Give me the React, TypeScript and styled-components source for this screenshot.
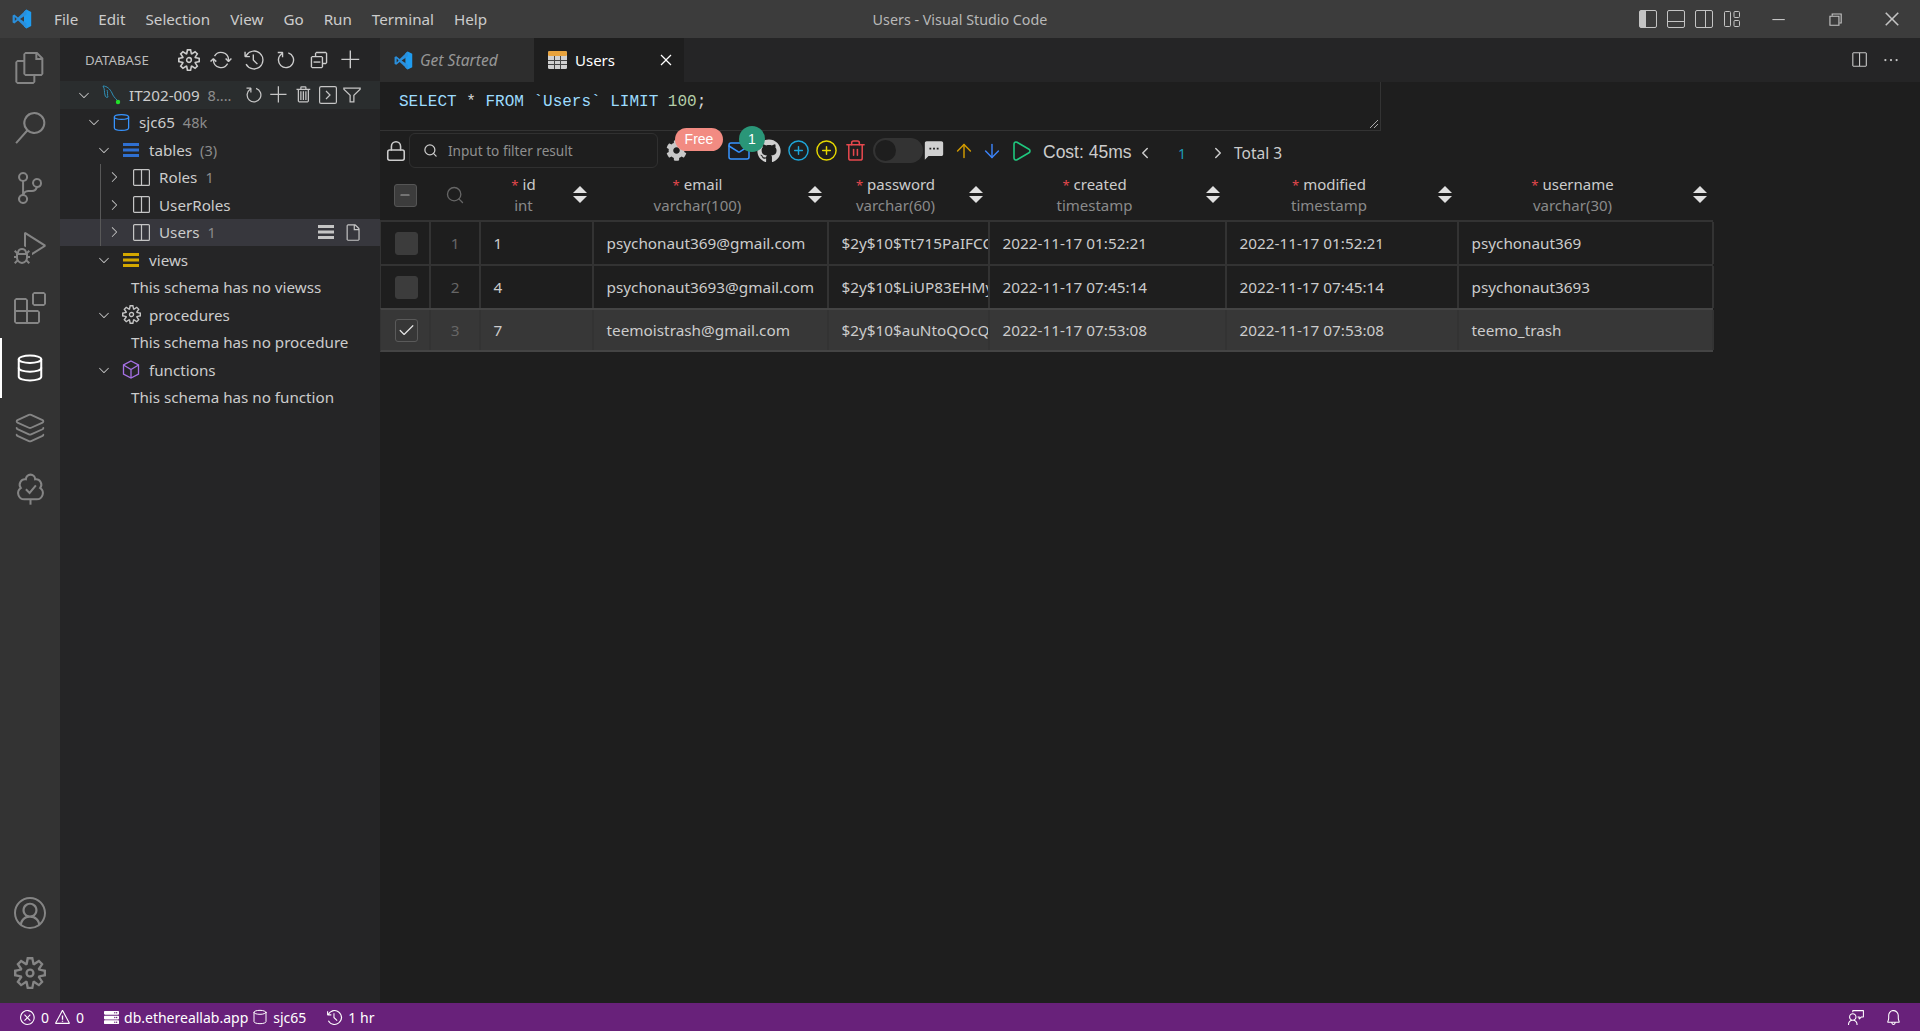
import styled, { createGlobalStyle } from "styled-components";
import type { ReactNode } from "react";
import {
  ArrowDown,
  ArrowUp,
  Check,
  ChevronLeft,
  ChevronRight,
  CirclePlus,
  Cylinder,
  Database,
  Layers,
  Lock,
  Mail,
  Minus,
  Play,
  Search,
  Trash2,
} from "lucide-react";
import {
  VscAccount,
  VscAdd,
  VscBell,
  VscChevronDown,
  VscChevronRight,
  VscChromeClose,
  VscChromeMinimize,
  VscChromeRestore,
  VscClose,
  VscCollapseAll,
  VscDebugAlt,
  VscEllipsis,
  VscError,
  VscExtensions,
  VscFeedback,
  VscFile,
  VscFiles,
  VscFilter,
  VscHistory,
  VscRefresh,
  VscSearch,
  VscSettingsGear,
  VscSourceControl,
  VscSplitHorizontal,
  VscSync,
  VscTrash,
  VscWarning,
} from "react-icons/vsc";
import { FaCog, FaGithub, FaServer } from "react-icons/fa";
import { MdSms } from "react-icons/md";

const UI_FONT = `"Noto Sans", "Open Sans", "Liberation Sans", sans-serif`;
const COLUMNS = "50px 50px 113px 235px 161px 237px 232px 255px";

const GlobalStyle = createGlobalStyle`
  html, body {
    margin: 0;
    padding: 0;
    height: 100%;
    overflow: hidden;
    background: #1e1e1e;
  }
  #root {
    height: 100%;
  }
  * {
    box-sizing: border-box;
  }
`;

const Page = styled.div`
  display: flex;
  flex-direction: column;
  height: 1031px;
  font-family: ${UI_FONT};
  color: #cccccc;
`;

/* title bar */

const TitleBar = styled.div`
  display: grid;
  grid-template-columns: 1fr auto 1fr;
  align-items: center;
  height: 38px;
  flex: none;
  background: #3c3c3c;
`;

const TitleLeft = styled.div`
  display: flex;
  align-items: center;
  padding-left: 12px;
`;

const MenuList = styled.div`
  display: flex;
  gap: 20px;
  margin-left: 22px;
  font-size: 15.2px;
  color: #cccccc;
`;

const WindowTitle = styled.div`
  font-size: 14.3px;
  color: #b8b8b8;
`;

const TitleRight = styled.div`
  display: flex;
  align-items: center;
  justify-content: flex-end;
  color: #c4c4c4;
`;

const LayoutIcons = styled.div`
  display: flex;
  gap: 10px;
  margin-right: 8px;
`;

const WindowButton = styled.div`
  display: flex;
  align-items: center;
  justify-content: center;
  width: 57px;
  height: 38px;
`;

/* body */

const Body = styled.div`
  display: flex;
  flex: 1;
  min-height: 0;
`;

const ActivityBar = styled.div`
  display: flex;
  flex-direction: column;
  width: 60px;
  flex: none;
  background: #333333;
`;

const ActivityItem = styled.div<{ $active?: boolean }>`
  display: flex;
  align-items: center;
  justify-content: center;
  height: 60px;
  color: ${(p) => (p.$active ? "#ffffff" : "#858585")};
  border-left: 2px solid ${(p) => (p.$active ? "#ffffff" : "transparent")};
  padding-right: 2px;
`;

const ActivitySpacer = styled.div`
  flex: 1;
`;

const SideBar = styled.div`
  width: 320px;
  flex: none;
  background: #252526;
  font-size: 15.2px;
`;

const SideHeader = styled.div`
  display: flex;
  align-items: center;
  height: 43px;
  padding-left: 25px;
  font-size: 13.3px;
  color: #bbbbbb;
`;

const SideHeaderIcons = styled.div`
  display: flex;
  gap: 10.5px;
  margin-left: 29px;
  color: #cccccc;
`;

const TreeGroup = styled.div`
  position: relative;
  &::before {
    content: "";
    position: absolute;
    left: 40px;
    top: 0;
    bottom: 0;
    width: 1px;
    background: #585858;
    z-index: 1;
  }
`;

const TreeRow = styled.div<{ $indent: number; $bg?: string }>`
  display: flex;
  align-items: center;
  height: 27.5px;
  padding-left: ${(p) => p.$indent}px;
  padding-right: 18px;
  background: ${(p) => p.$bg || "transparent"};
  white-space: nowrap;
`;

const Twistie = styled.span`
  display: flex;
  width: 16px;
  flex: none;
  justify-content: center;
  color: #c5c5c5;
`;

const TreeIcon = styled.span<{ $color?: string }>`
  display: flex;
  width: 20px;
  flex: none;
  margin-left: 9px;
  margin-right: 8px;
  justify-content: center;
  color: ${(p) => p.$color || "#c5c5c5"};
`;

const TreeDesc = styled.span`
  margin-left: 8px;
  color: #8c8c8c;
  font-size: 14.5px;
`;

const TreeActions = styled.span<{ $gap: number }>`
  display: flex;
  align-items: center;
  gap: ${(p) => p.$gap}px;
  margin-left: auto;
  color: #c5c5c5;
`;

/* editor */

const Editor = styled.div`
  flex: 1;
  min-width: 0;
  background: #1e1e1e;
`;

const TabBar = styled.div`
  display: flex;
  align-items: stretch;
  height: 44px;
  background: #252526;
`;

const Tab = styled.div<{ $active?: boolean; $w: number }>`
  display: flex;
  align-items: center;
  gap: ${(p) => (p.$active ? 8 : 7)}px;
  width: ${(p) => p.$w}px;
  padding-left: 14px;
  font-size: ${(p) => (p.$active ? 15 : 15.6)}px;
  font-style: ${(p) => (p.$active ? "normal" : "italic")};
  color: ${(p) => (p.$active ? "#ffffff" : "#969696")};
  background: ${(p) => (p.$active ? "#1e1e1e" : "#2d2d2d")};
`;

const TabClose = styled.span`
  display: flex;
  margin-left: auto;
  margin-right: 8px;
  color: #ffffff;
`;

const EditorActions = styled.div`
  display: flex;
  align-items: center;
  gap: 14px;
  margin-left: auto;
  padding-right: 20px;
  color: #c5c5c5;
`;

const SqlBox = styled.div`
  position: relative;
  width: 1001px;
  height: 49px;
  padding: 10px 19px;
  border-right: 1px solid #333333;
  border-bottom: 1px solid #333333;
  font-family: "Liberation Mono", monospace;
  font-size: 16px;
  line-height: 20px;
  color: #9cdcfe;
`;

const SqlNumber = styled.span`
  color: #b5cea8;
`;

const SqlPunct = styled.span`
  color: #d4d4d4;
`;

const ResizeGrip = styled.svg`
  position: absolute;
  right: 1px;
  bottom: 1px;
`;

const Toolbar = styled.div`
  display: flex;
  align-items: center;
  height: 39px;
  padding-left: 3px;
  color: #cccccc;
`;

const Slot = styled.div<{ $w: number; $ml?: number; $color?: string }>`
  position: relative;
  display: flex;
  align-items: center;
  justify-content: center;
  flex: none;
  width: ${(p) => p.$w}px;
  margin-left: ${(p) => p.$ml || 0}px;
  color: ${(p) => p.$color || "#cccccc"};
`;

const FilterInput = styled.div`
  display: flex;
  align-items: center;
  gap: 10px;
  width: 249px;
  height: 35px;
  padding-left: 13px;
  flex: none;
  border: 1px solid #303030;
  border-radius: 6px;
  font-size: 13.6px;
  color: #8f8f8f;
`;

const FreeBadge = styled.span`
  position: absolute;
  left: 17px;
  top: -12px;
  width: 48px;
  height: 23px;
  border-radius: 12px;
  background: #f28b82;
  color: #ffffff;
  font-family: "Liberation Sans", sans-serif;
  font-size: 14px;
  line-height: 23px;
  text-align: center;
`;

const CountBadge = styled.span`
  position: absolute;
  left: 15px;
  top: -13px;
  width: 26px;
  height: 26px;
  border-radius: 50%;
  background: #2a9678;
  color: #ffffff;
  font-family: "Liberation Sans", sans-serif;
  font-size: 14px;
  line-height: 26px;
  text-align: center;
  z-index: 1;
`;

const Toggle = styled.div`
  position: relative;
  width: 50px;
  height: 25px;
  margin-left: 3px;
  flex: none;
  border-radius: 13px;
  background: #333333;
  &::before {
    content: "";
    position: absolute;
    left: 2px;
    top: 2px;
    width: 21px;
    height: 21px;
    border-radius: 50%;
    background: #1e1e1e;
  }
`;

const CostLabel = styled.span`
  margin-left: 8px;
  margin-top: 4px;
  width: 88px;
  flex: none;
  font-family: "Liberation Sans", sans-serif;
  font-size: 17.5px;
  white-space: nowrap;
`;

const PagerArrow = styled(Slot)`
  margin-top: 4px;
`;

const PageNumber = styled.span`
  width: 46px;
  margin-top: 5px;
  flex: none;
  text-align: center;
  font-size: 14px;
  color: #1f9cb8;
`;

const TotalLabel = styled.span`
  margin-left: 3px;
  margin-top: 4px;
  font-size: 15.5px;
  white-space: nowrap;
`;

/* result table */

const Grid = styled.div`
  display: grid;
  grid-template-columns: ${COLUMNS};
  width: 1333px;
`;

const HeaderRow = styled(Grid)`
  height: 50px;
`;

const HeaderCell = styled.div`
  position: relative;
  display: flex;
  flex-direction: column;
  align-items: center;
  justify-content: center;
  padding-top: 1px;
  padding-right: 26px;
  font-size: 15px;
  line-height: 19.6px;
`;

const HeaderTool = styled.div`
  display: flex;
  align-items: center;
  justify-content: center;
`;

const ColumnName = styled.span`
  color: #cccccc;
  white-space: nowrap;
`;

const Required = styled.span`
  color: #e5484d;
  margin-right: 4px;
  font-size: 13px;
`;

const ColumnType = styled.span`
  color: #8a8a8a;
  white-space: nowrap;
`;

const SortIcon = styled.svg`
  position: absolute;
  right: 6.5px;
  top: 16px;
`;

const DataRow = styled(Grid)<{ $selected?: boolean }>`
  height: 44px;
  background: ${(p) => (p.$selected ? "#373737" : "transparent")};
  border-top: 2px solid ${(p) => (p.$selected ? "#444444" : "#333333")};
  border-left: 1px solid #333333;
  &:last-child {
    border-bottom: 2px solid #444444;
  }
`;

const Cell = styled.div`
  display: flex;
  align-items: center;
  padding-left: 12.5px;
  border-right: 2px solid #333333;
  overflow: hidden;
  white-space: nowrap;
  font-size: 15.3px;
  color: #cccccc;
`;

const CenterCell = styled(Cell)`
  justify-content: center;
  padding-left: 0;
`;

const CheckCell = styled(CenterCell)`
  padding-left: 2px;
`;

const RowNumber = styled(CenterCell)`
  color: #666666;
`;

const CheckBox = styled.div<{ $outlined?: boolean }>`
  display: flex;
  align-items: center;
  justify-content: center;
  width: 23px;
  height: 23px;
  border-radius: 3px;
  background: ${(p) => (p.$outlined ? "transparent" : "#3c3c3c")};
  border: 1px solid ${(p) => (p.$outlined ? "#5a5a5a" : "#3c3c3c")};
  color: #e6e6e6;
`;

const HeaderCheck = styled(CheckBox)`
  background: #3c3c3c;
  border-color: #555555;
  color: #aaaaaa;
`;

/* status bar */

const StatusBar = styled.div`
  display: flex;
  align-items: center;
  height: 28px;
  flex: none;
  padding: 0 18px 0 19px;
  background: #68217a;
  color: #ffffff;
  font-size: 14px;
`;

const StatusItem = styled.span<{ $ml?: number }>`
  display: flex;
  align-items: center;
  gap: 5px;
  margin-left: ${(p) => p.$ml || 0}px;
  white-space: nowrap;
`;

const StatusRight = styled.div`
  display: flex;
  align-items: center;
  gap: 20px;
  margin-left: auto;
`;

const VsCodeLogo = ({ size }: { size: number }) => (
  <svg width={size} height={size} viewBox="0 0 100 100">
    <path d="M72 3 L96 15 V85 L72 97 L60 88 V12 Z" fill="#1f9cf0" />
    <path
      d="M72 3 L30 42 L12 27 L3 32 V68 L12 73 L30 58 L72 97 V71 L40 50 L72 29 Z M14 40 L24 50 L14 60 Z"
      fill="#2a8fdc"
      fillRule="evenodd"
    />
  </svg>
);

const LayoutIcon = ({ kind }: { kind: "left" | "bottom" | "right" | "custom" }) => (
  <svg width={18} height={18} viewBox="0 0 18 18" fill="none" stroke="currentColor" strokeWidth={1}>
    {kind === "custom" ? (
      <>
        <rect x="1.5" y="1.5" width="6" height="15" rx="1" />
        <rect x="11" y="1.5" width="5.5" height="6" rx="1" />
        <rect x="11" y="10.5" width="5.5" height="6" rx="1" />
      </>
    ) : (
      <>
        <rect x="0.5" y="0.5" width="17" height="17" rx="1.5" />
        {kind === "left" && <rect x="1" y="1" width="6" height="16" fill="currentColor" stroke="none" />}
        {kind === "bottom" && <path d="M1 11.5 H17" />}
        {kind === "right" && <path d="M10.5 1 V17" />}
      </>
    )}
  </svg>
);

const TreeCheckIcon = () => (
  <svg width={37} height={37} viewBox="0 0 24 24" fill="none" stroke="currentColor" strokeWidth={1.3}>
    <path d="M8 19a4 4 0 0 1-2.24-7.32A3.5 3.5 0 0 1 9 6.03V6a3 3 0 1 1 6 0v.04a3.5 3.5 0 0 1 3.24 5.65A4 4 0 0 1 16 19Z" />
    <path d="M12 19v3.5" />
    <path d="M9 12.5l2.4 2.4L15.5 10" />
  </svg>
);

const MysqlIcon = () => (
  <svg width={20} height={20} viewBox="0 0 20 20" fill="none">
    <path d="M2 1 C6 1 9 4 11 8 C12 11 14 13 16 15" stroke="#2f8fb5" strokeWidth={1} />
    <path d="M2 1 C4 4 3 7 4 10 C4 12 6 13 7 12 C6 10 7 7 6 5" stroke="#2f8fb5" strokeWidth={1} />
    <circle cx="17" cy="17" r="2.2" fill="#22e02a" />
  </svg>
);

const ListIcon = ({ color }: { color: string }) => (
  <svg width={18} height={16} viewBox="0 0 18 16" fill={color}>
    <rect x="1" y="1" width="16" height="3" />
    <rect x="1" y="6.5" width="16" height="3" />
    <rect x="1" y="12" width="16" height="3" />
  </svg>
);

const TableIcon = () => (
  <svg width={19} height={18} viewBox="0 0 19 18">
    <rect x="0" y="0" width="19" height="18" rx="1.5" fill="#d0d0d0" />
    <rect x="0" y="0" width="19" height="5" rx="1.5" fill="#e8a33d" />
    <path d="M6.5 5 V18 M12.5 5 V18 M0 9.5 H19 M0 13.5 H19" stroke="#444444" strokeWidth={1} />
  </svg>
);

const TableRowIcon = () => (
  <svg width={17} height={17} viewBox="0 0 17 17" fill="none" stroke="#c5c5c5" strokeWidth={1.2}>
    <rect x="0.6" y="0.6" width="15.8" height="15.8" rx="1" />
    <path d="M8.5 1 V16" />
  </svg>
);

const ConsoleIcon = () => (
  <svg width={18} height={18} viewBox="0 0 18 18" fill="none" stroke="currentColor" strokeWidth={1.2}>
    <rect x="0.6" y="0.6" width="16.8" height="16.8" rx="1.5" />
    <path d="M7 5 L11 9 L7 13" />
  </svg>
);

const SortArrows = () => (
  <SortIcon width={14} height={17} viewBox="0 0 14 17" fill="#e0e0e0">
    <path d="M7 0 L14 7 H0 Z" />
    <path d="M0 10 H14 L7 17 Z" />
  </SortIcon>
);

const Expanded = () => (
  <Twistie>
    <VscChevronDown size={18} />
  </Twistie>
);

const Collapsed = () => (
  <Twistie>
    <VscChevronRight size={18} />
  </Twistie>
);

const ACTIVITY_TOP: { key: string; icon: ReactNode; active?: boolean }[] = [
  { key: "files", icon: <VscFiles size={32} /> },
  { key: "search", icon: <VscSearch size={32} /> },
  { key: "git", icon: <VscSourceControl size={32} /> },
  { key: "debug", icon: <VscDebugAlt size={32} /> },
  { key: "ext", icon: <VscExtensions size={32} /> },
  { key: "db", icon: <Database size={30} strokeWidth={1.6} />, active: true },
  { key: "layers", icon: <Layers size={32} strokeWidth={1.4} /> },
  { key: "tree", icon: <TreeCheckIcon /> },
];

const MENU = ["File", "Edit", "Selection", "View", "Go", "Run", "Terminal", "Help"];

const HEADERS = [
  { name: "id", type: "int" },
  { name: "email", type: "varchar(100)" },
  { name: "password", type: "varchar(60)" },
  { name: "created", type: "timestamp" },
  { name: "modified", type: "timestamp" },
  { name: "username", type: "varchar(30)" },
];

const ROWS = [
  {
    id: "1",
    email: "psychonaut369@gmail.com",
    password: "$2y$10$Tt715PaIFCC",
    created: "2022-11-17 01:52:21",
    modified: "2022-11-17 01:52:21",
    username: "psychonaut369",
  },
  {
    id: "4",
    email: "psychonaut3693@gmail.com",
    password: "$2y$10$LiUP83EHMy",
    created: "2022-11-17 07:45:14",
    modified: "2022-11-17 07:45:14",
    username: "psychonaut3693",
  },
  {
    id: "7",
    email: "teemoistrash@gmail.com",
    password: "$2y$10$auNtoQOcQ",
    created: "2022-11-17 07:53:08",
    modified: "2022-11-17 07:53:08",
    username: "teemo_trash",
    selected: true,
  },
];

const App = () => {
  return (
    <Page>
      <GlobalStyle />
      <TitleBar>
        <TitleLeft>
          <VsCodeLogo size={20} />
          <MenuList>
            {MENU.map((item) => (
              <span key={item}>{item}</span>
            ))}
          </MenuList>
        </TitleLeft>
        <WindowTitle>Users - Visual Studio Code</WindowTitle>
        <TitleRight>
          <LayoutIcons>
            <LayoutIcon kind="left" />
            <LayoutIcon kind="bottom" />
            <LayoutIcon kind="right" />
            <LayoutIcon kind="custom" />
          </LayoutIcons>
          <WindowButton>
            <VscChromeMinimize size={18} />
          </WindowButton>
          <WindowButton>
            <VscChromeRestore size={18} />
          </WindowButton>
          <WindowButton>
            <VscChromeClose size={20} />
          </WindowButton>
        </TitleRight>
      </TitleBar>

      <Body>
        <ActivityBar>
          {ACTIVITY_TOP.map((item) => (
            <ActivityItem key={item.key} $active={item.active}>
              {item.icon}
            </ActivityItem>
          ))}
          <ActivitySpacer />
          <ActivityItem>
            <VscAccount size={32} />
          </ActivityItem>
          <ActivityItem>
            <VscSettingsGear size={32} />
          </ActivityItem>
        </ActivityBar>

        <SideBar>
          <SideHeader>
            DATABASE
            <SideHeaderIcons>
              <VscSettingsGear size={22} />
              <VscSync size={22} />
              <VscHistory size={22} />
              <VscRefresh size={22} />
              <VscCollapseAll size={22} />
              <VscAdd size={22} />
            </SideHeaderIcons>
          </SideHeader>

          <TreeRow $indent={16} $bg="#2a2d2e">
            <Expanded />
            <TreeIcon>
              <MysqlIcon />
            </TreeIcon>
            IT202-009
            <TreeDesc>8....</TreeDesc>
            <TreeActions $gap={5}>
              <VscRefresh size={20} />
              <VscAdd size={20} />
              <VscTrash size={20} />
              <ConsoleIcon />
              <VscFilter size={20} />
            </TreeActions>
          </TreeRow>
          <TreeRow $indent={26}>
            <Expanded />
            <TreeIcon $color="#3794ff">
              <Cylinder size={19} strokeWidth={1.6} />
            </TreeIcon>
            sjc65
            <TreeDesc>48k</TreeDesc>
          </TreeRow>
          <TreeRow $indent={36}>
            <Expanded />
            <TreeIcon>
              <ListIcon color="#2f6fd0" />
            </TreeIcon>
            tables
            <TreeDesc>(3)</TreeDesc>
          </TreeRow>
          <TreeGroup>
            <TreeRow $indent={46}>
              <Collapsed />
              <TreeIcon>
                <TableRowIcon />
              </TreeIcon>
              Roles
              <TreeDesc>1</TreeDesc>
            </TreeRow>
            <TreeRow $indent={46}>
              <Collapsed />
              <TreeIcon>
                <TableRowIcon />
              </TreeIcon>
              UserRoles
            </TreeRow>
            <TreeRow $indent={46} $bg="#37373d">
              <Collapsed />
              <TreeIcon>
                <TableRowIcon />
              </TreeIcon>
              Users
              <TreeDesc>1</TreeDesc>
              <TreeActions $gap={8}>
                <ListIcon color="#c5c5c5" />
                <VscFile size={19} />
              </TreeActions>
            </TreeRow>
          </TreeGroup>
          <TreeRow $indent={36}>
            <Expanded />
            <TreeIcon>
              <ListIcon color="#d4a800" />
            </TreeIcon>
            views
          </TreeRow>
          <TreeRow $indent={71}>This schema has no viewss</TreeRow>
          <TreeRow $indent={36}>
            <Expanded />
            <TreeIcon>
              <VscSettingsGear size={19} />
            </TreeIcon>
            procedures
          </TreeRow>
          <TreeRow $indent={71}>This schema has no procedure</TreeRow>
          <TreeRow $indent={36}>
            <Expanded />
            <TreeIcon $color="#a671e6">
              <svg width={18} height={19} viewBox="0 0 18 19" fill="none" stroke="currentColor" strokeWidth={1.3}>
                <path d="M9 1 L16.5 5 V14 L9 18 L1.5 14 V5 Z" />
                <path d="M1.5 5 L9 9.5 L16.5 5 M9 9.5 V18" />
              </svg>
            </TreeIcon>
            functions
          </TreeRow>
          <TreeRow $indent={71}>This schema has no function</TreeRow>
        </SideBar>

        <Editor>
          <TabBar>
            <Tab $w={154}>
              <VsCodeLogo size={19} />
              <span>Get Started</span>
            </Tab>
            <Tab $active $w={150}>
              <TableIcon />
              <span>Users</span>
              <TabClose>
                <VscClose size={20} />
              </TabClose>
            </Tab>
            <EditorActions>
              <VscSplitHorizontal size={18} />
              <VscEllipsis size={18} />
            </EditorActions>
          </TabBar>

          <SqlBox>
            SELECT <SqlPunct>*</SqlPunct> FROM `Users` LIMIT <SqlNumber>100</SqlNumber>
            <SqlPunct>;</SqlPunct>
            <ResizeGrip width={10} height={10} viewBox="0 0 10 10" stroke="#aaaaaa" strokeWidth={1}>
              <path d="M9 1 L1 9 M9 5 L5 9" />
            </ResizeGrip>
          </SqlBox>

          <Toolbar>
            <Slot $w={26}>
              <Lock size={22} strokeWidth={1.7} />
            </Slot>
            <FilterInput>
              <Search size={15} color="#cccccc" />
              Input to filter result
            </FilterInput>
            <Slot $w={36} $color="#c8c8c8">
              <FaCog size={21} />
              <FreeBadge>Free</FreeBadge>
            </Slot>
            <Slot $w={30} $ml={30} $color="#3794ff">
              <Mail size={24} strokeWidth={1.5} />
              <CountBadge>1</CountBadge>
            </Slot>
            <Slot $w={30} $color="#d0d0d0">
              <FaGithub size={24} />
            </Slot>
            <Slot $w={28} $color="#1ea5d8">
              <CirclePlus size={23} strokeWidth={1.5} />
            </Slot>
            <Slot $w={29} $color="#e6d800">
              <CirclePlus size={23} strokeWidth={1.5} />
            </Slot>
            <Slot $w={29} $color="#e5484d">
              <Trash2 size={23} strokeWidth={1.6} />
            </Slot>
            <Toggle />
            <Slot $w={22} $color="#d0d0d0">
              <MdSms size={23} />
            </Slot>
            <Slot $w={28} $ml={5} $color="#d19a00">
              <ArrowUp size={22} strokeWidth={1.6} />
            </Slot>
            <Slot $w={28} $color="#3b82f6">
              <ArrowDown size={22} strokeWidth={1.6} />
            </Slot>
            <Slot $w={28} $ml={1} $color="#1fc77e">
              <Play size={24} strokeWidth={1.6} />
            </Slot>
            <CostLabel>Cost: 45ms</CostLabel>
            <PagerArrow $w={28}>
              <ChevronLeft size={18} />
            </PagerArrow>
            <PageNumber>1</PageNumber>
            <PagerArrow $w={26}>
              <ChevronRight size={18} />
            </PagerArrow>
            <TotalLabel>Total 3</TotalLabel>
          </Toolbar>

          <HeaderRow>
            <HeaderTool>
              <HeaderCheck>
                <Minus size={14} />
              </HeaderCheck>
            </HeaderTool>
            <HeaderTool>
              <Search size={20} color="#666666" strokeWidth={1.6} />
            </HeaderTool>
            {HEADERS.map((col) => (
              <HeaderCell key={col.name}>
                <ColumnName>
                  <Required>*</Required>
                  {col.name}
                </ColumnName>
                <ColumnType>{col.type}</ColumnType>
                <SortArrows />
              </HeaderCell>
            ))}
          </HeaderRow>

          {ROWS.map((row, i) => (
            <DataRow key={row.id} $selected={row.selected}>
              <CheckCell>
                <CheckBox $outlined={row.selected}>
                  {row.selected && <Check size={19} strokeWidth={1.5} />}
                </CheckBox>
              </CheckCell>
              <RowNumber>{i + 1}</RowNumber>
              <Cell>{row.id}</Cell>
              <Cell>{row.email}</Cell>
              <Cell>{row.password}</Cell>
              <Cell>{row.created}</Cell>
              <Cell>{row.modified}</Cell>
              <Cell>{row.username}</Cell>
            </DataRow>
          ))}
        </Editor>
      </Body>

      <StatusBar>
        <StatusItem>
          <VscError size={17} />0
        </StatusItem>
        <StatusItem $ml={5}>
          <VscWarning size={17} />0
        </StatusItem>
        <StatusItem $ml={20}>
          <FaServer size={15} />
          db.ethereallab.app
        </StatusItem>
        <StatusItem $ml={4}>
          <Cylinder size={16} strokeWidth={1.5} />
          sjc65
        </StatusItem>
        <StatusItem $ml={20}>
          <VscHistory size={17} />1 hr
        </StatusItem>
        <StatusRight>
          <VscFeedback size={17} />
          <VscBell size={17} />
        </StatusRight>
      </StatusBar>
    </Page>
  );
};

export default App;
